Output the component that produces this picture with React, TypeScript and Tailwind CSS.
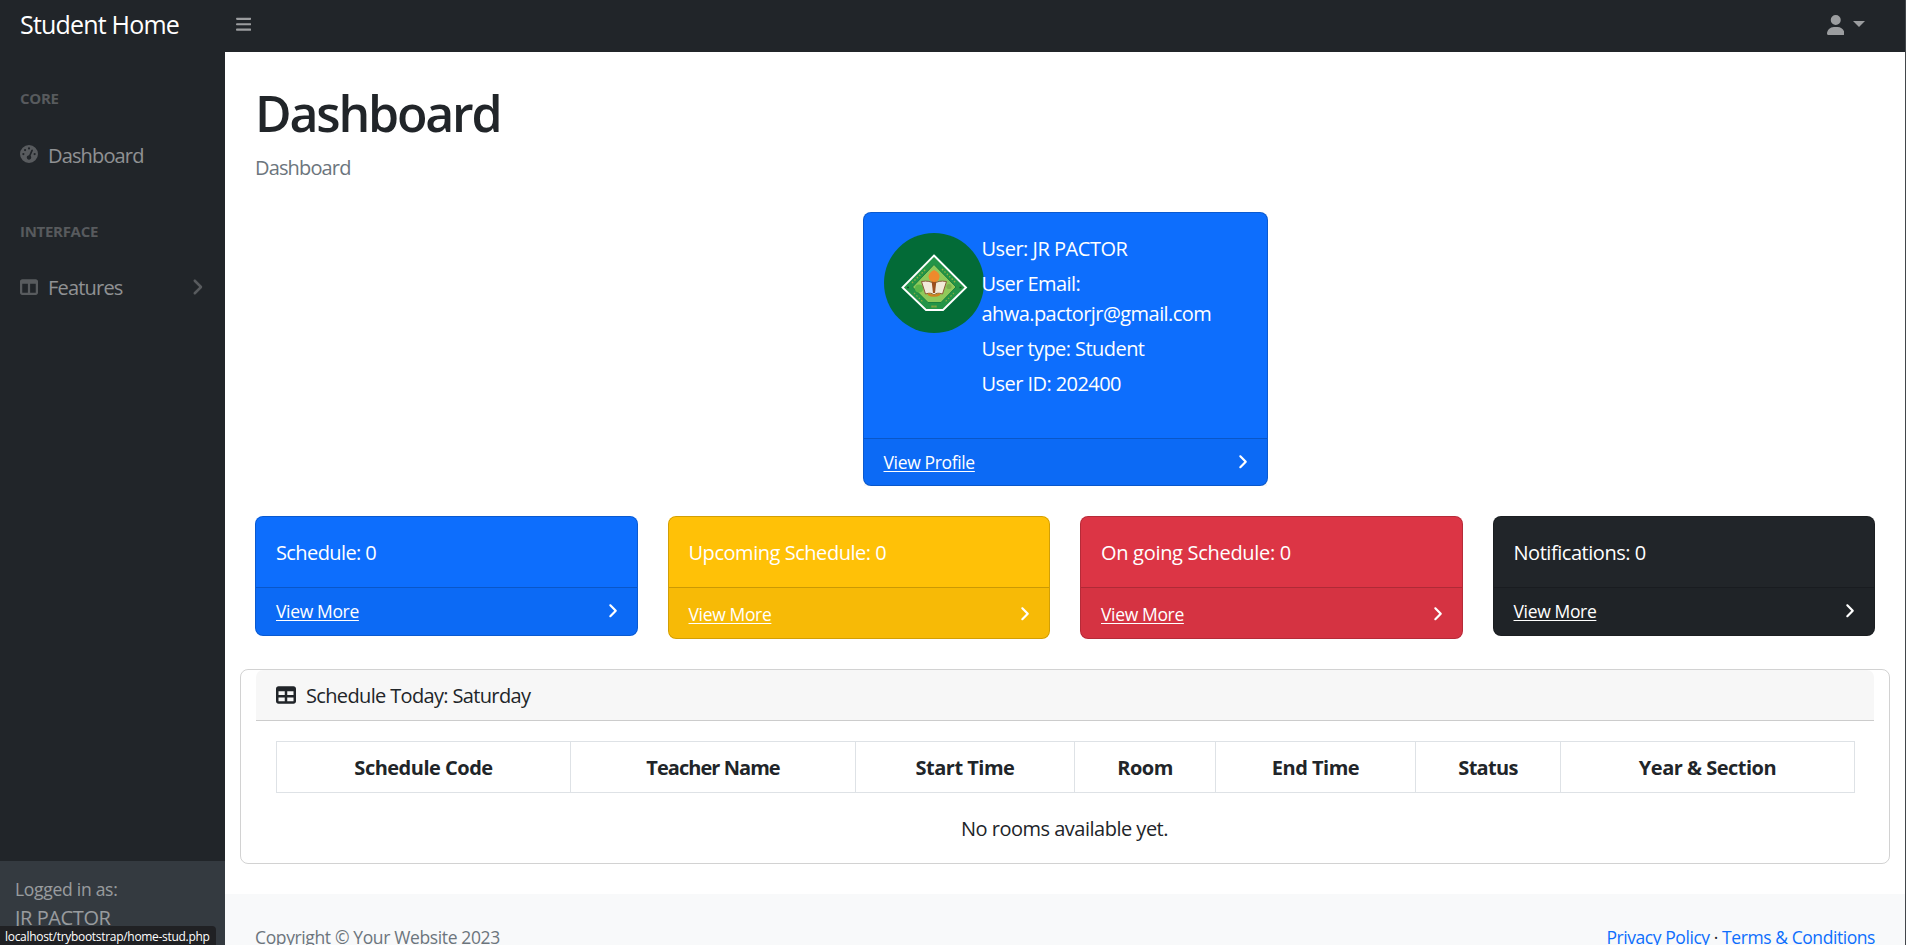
import type { ReactNode } from "react";
import { FaBars, FaUser, FaTableColumns, FaGaugeHigh, FaTable, FaAngleRight } from "react-icons/fa6";

function SchoolSeal() {
  return (
    <svg viewBox="0 0 100 100" className="h-[100px] w-[100px]">
      <circle cx="50" cy="50" r="50" fill="#036b37" />
      <path d="M50 22.5 82 54.5 59 77H42L18.5 54.5Z" fill="#239447" stroke="#fff" strokeWidth="1.9" />
      <path d="M50 31.5 72 54 57 69.5H44L28.5 54Z" fill="#8fc95a" stroke="#1b7f3e" strokeWidth="1" />
      <path d="M28 50 42 36M58 36 72 50" stroke="#8fae3e" strokeWidth="1.4" strokeDasharray="1.6 1.8" />
      <path d="M30 60 39 69M70 60 61 69" stroke="#86aa40" strokeWidth="1.2" strokeDasharray="1.6 1.8" />
      <path d="M47.500 73.500H53" stroke="#a5ad3c" strokeWidth="1.800" strokeDasharray="1.2 .7" />
      <path d="M23 54.500H25M75.500 54.500H77.500" stroke="#12502b" strokeWidth="1.500" />
      <circle cx="35" cy="55.500" r="4" fill="#5cb548" />
      <circle cx="65" cy="53.500" r="2.600" fill="#79b04e" />
      <path d="M37.500 48.500Q46 47 50 51Q54 47 62.500 48.500L58.500 61Q53 59 50 62Q47 59 41.500 61Z" fill="#f1ead9" stroke="#8a5a35" strokeWidth="1" />
      <path d="M47.500 47H52.500L51 60H49Z" fill="#9a4f1d" />
      <path d="M50 37Q56.500 40 55.500 44.500Q54.500 49 50 49Q45 48.500 44.500 43.500Q45 39.500 50 37Z" fill="#ee8a2c" />
      <path d="M44 61Q50 64.500 56 61" stroke="#d0801f" strokeWidth="2.200" fill="none" />
    </svg>
  );
}

function CardFooter({ label, tall = false }: { label: string; tall?: boolean }) {
  return (
    <div className={`flex items-center justify-between border-t border-black/[0.175] bg-black/[0.03] pr-[19px] pl-5 text-[17.5px] tracking-[-0.35px] ${tall ? "h-[51px] pt-px" : "h-[48px] pb-px"}`}>
      <a href="#" className="underline underline-offset-2">{label}</a>
      <FaAngleRight className="h-[17.5px] w-[11px]" />
    </div>
  );
}

function StatCard({ color, title, tracking, tall }: { color: string; title: string; tracking: string; tall?: boolean }) {
  return (
    <div className={`flex flex-col overflow-hidden rounded-[8px] text-white ${color}`}>
      <div className="rounded-[8px] border border-black/[0.175]">
        <div className={`h-[70px] px-5 pt-[21px] leading-[30px] ${tracking}`}>{title}</div>
        <CardFooter label="View More" tall={tall} />
      </div>
    </div>
  );
}

function SideHeading({ children }: { children: ReactNode }) {
  return <div className="px-5 pt-[35px] pb-[15px] text-[15px] leading-[22.5px] font-bold tracking-[-0.3px] text-white/25 uppercase">{children}</div>;
}

const columns = [
  { label: "Schedule Code", width: "w-[294px]", tracking: "tracking-[-0.5px]" },
  { label: "Teacher Name", width: "w-[285px]", tracking: "tracking-[-0.95px]" },
  { label: "Start Time", width: "w-[219px]", tracking: "tracking-[-0.5px]" },
  { label: "Room", width: "w-[141px]", tracking: "tracking-[-0.5px]" },
  { label: "End Time", width: "w-[200px]", tracking: "tracking-[-0.5px]" },
  { label: "Status", width: "w-[145px]", tracking: "tracking-[-0.7px]" },
  { label: "Year & Section", width: "w-[294px]", tracking: "tracking-[-0.5px]" },
];

export default function App() {
  return (
    <div className="relative flex h-[945px] w-[1906px] flex-col overflow-hidden border-r border-[#43474b] bg-white font-['Open_Sans','Noto_Sans',sans-serif] text-[20px] leading-[30px] tracking-[-0.4px] text-[#212529]">
      <header className="flex h-[52px] shrink-0 items-center bg-[#212529]">
        <a href="#" className="w-[225px] pb-[4px] pl-5 text-[25px] tracking-[-0.8px] text-white">Student Home</a>
        <FaBars className="ml-[11px] h-[17.5px] w-[15.3px] -translate-y-[1.5px] text-white/55" />
        <div className="mr-10 ml-auto flex items-center gap-[9px] text-white/55">
          <FaUser className="h-5 w-[17.5px] -translate-y-px" />
          <span className="h-0 w-0 -translate-y-[2px] border-x-[6px] border-t-[6px] border-x-transparent border-t-current" />
        </div>
      </header>

      <div className="flex min-h-0 flex-1">
        <aside className="flex w-[225px] shrink-0 flex-col bg-[#212529]">
          <nav className="flex-1">
            <SideHeading>Core</SideHeading>
            <a href="#" className="flex h-[60px] items-center px-5 pt-[2px] tracking-[-0.85px] text-white/50">
              <FaGaugeHigh className="mr-[10px] h-[18px] w-[18px] -translate-y-[2px] text-white/25" />
              Dashboard
            </a>
            <SideHeading>Interface</SideHeading>
            <a href="#" className="flex h-[60px] items-center pt-[2px] pr-[22px] pl-5 tracking-[-0.8px] text-white/50">
              <FaTableColumns className="mr-[10px] h-[18px] w-[18px] -translate-y-px text-white/25" />
              Features
              <FaAngleRight className="ml-auto h-5 w-[12.500px] -translate-y-px text-white/25" />
            </a>
          </nav>
          <div className="h-[84px] bg-[#343a40] px-[15px] pt-[15px] text-white/50">
            <div className="text-[17.5px] leading-[26px] tracking-[-0.28px]">Logged in as:</div>
            <div className="pt-px">JR PACTOR</div>
          </div>
        </aside>

        <div className="flex min-w-0 flex-1 flex-col">
          <main className="h-[842px] shrink-0 px-[15px]">
            <div className="px-[15px]">
              <h1 className="h-[90px] pt-[31px] text-[50px] leading-[60px] font-semibold tracking-[-2.2px]">Dashboard</h1>
              <div className="mt-[10px] h-[30px] pt-px tracking-[-0.85px] text-[#6c757d]">Dashboard</div>

              <section className="mx-auto mt-[30px] h-[274px] w-[405px] rounded-[8px] border border-black/[0.175] bg-[#0d6efd] text-white">
                <div className="flex h-[225px] p-5">
                  <div className="w-[98px] shrink-0"><SchoolSeal /></div>
                  <div className="flex flex-col gap-[5px] pt-px tracking-[-0.56px]">
                    <p className="tracking-[-0.48px]">User: JR PACTOR</p>
                    <p>User Email:<br />ahwa.pactorjr@gmail.com</p>
                    <p>User type: Student</p>
                    <p>User ID: 202400</p>
                  </div>
                </div>
                <CardFooter label="View Profile" />
              </section>

              <section className="mt-[30px] grid h-[123px] grid-cols-4 items-start gap-[30px]">
                <StatCard color="bg-[#0d6efd]" title="Schedule: 0" tracking="tracking-[-0.6px]" />
                <StatCard color="bg-[#ffc107]" title="Upcoming Schedule: 0" tracking="tracking-[-0.46px]" tall />
                <StatCard color="bg-[#dc3545]" title="On going Schedule: 0" tracking="tracking-[-0.3px]" tall />
                <StatCard color="bg-[#212529]" title="Notifications: 0" tracking="tracking-[-0.46px]" />
              </section>
            </div>

            <section className="mt-[30px] h-[195px] rounded-[8px] border border-black/[0.175] px-[15px]">
              <div className="flex h-[51px] items-center rounded-t-[7px] border-b border-black/[0.175] bg-black/[0.03] px-5 tracking-[-0.65px]">
                <FaTable className="mr-[10px] h-5 w-5" />
                <span className="pt-[2px]">Schedule Today: Saturday</span>
              </div>
              <div className="pt-5 pr-[21px] pl-5">
                <table className="w-full table-fixed border-collapse">
                  <thead>
                    <tr>
                      {columns.map((c) => (
                        <th key={c.label} className={`h-[51px] border border-[#dee2e6] pt-[2px] font-bold ${c.width} ${c.tracking}`}>{c.label}</th>
                      ))}
                    </tr>
                  </thead>
                </table>
                <p className="mt-[21px] text-center tracking-[-0.5px]">No rooms available yet.</p>
              </div>
            </section>
          </main>
          <footer className="flex flex-1 justify-between bg-[#f8f9fa] px-[30px] pt-[30px] text-[17.5px] leading-[26px] tracking-[-0.37px]">
            <span className="text-[#6c757d]">Copyright © Your Website 2023</span>
            <span className="tracking-[-0.43px]"><a href="#" className="text-[#0d6efd]">Privacy Policy</a> · <a href="#" className="text-[#0d6efd]">Terms &amp; Conditions</a></span>
          </footer>
        </div>
      </div>

      <div className="absolute bottom-0 left-0 h-[19px] w-[216px] rounded-tr-[4px] bg-[#202124] pl-[5px] text-[12px] leading-[21px] tracking-[-0.3px] whitespace-nowrap text-white">localhost/trybootstrap/home-stud.php</div>
    </div>
  );
}
